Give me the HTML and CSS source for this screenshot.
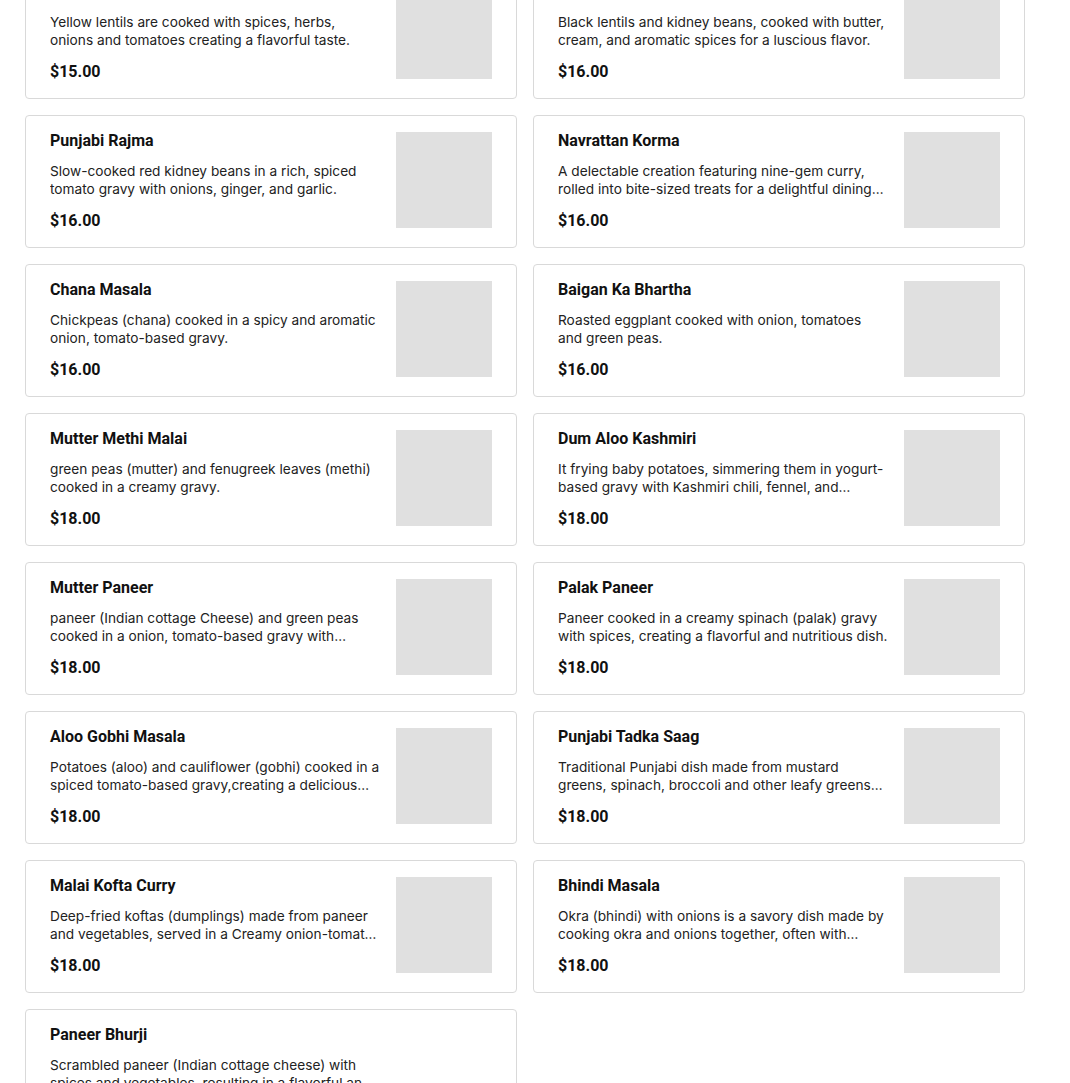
FILE: index.html
```html
<!DOCTYPE html>
<html lang="en">
<head>
  <meta charset="UTF-8" />
  <meta name="viewport" content="width=device-width, initial-scale=1.0"/>
  <title>Curries</title>
  <link rel="stylesheet" href="styles.css">
</head>
<body>
  <div class="menu-list">
    <div class="item-card">
      <div class="item-info">
        <h3 class="item-name">Yellow Dal Tadka</h3>
        <p class="item-desc">Yellow lentils are cooked with spices, herbs, onions and tomatoes creating a flavorful taste.</p>
        <div class="item-price">$15.00</div>
      </div>
      <div class="item-img"></div>
    </div>
    <div class="item-card">
      <div class="item-info">
        <h3 class="item-name">Dal Makhani</h3>
        <p class="item-desc">Black lentils and kidney beans, cooked with butter, cream, and aromatic spices for a luscious flavor.</p>
        <div class="item-price">$16.00</div>
      </div>
      <div class="item-img"></div>
    </div>
    <div class="item-card">
      <div class="item-info">
        <h3 class="item-name">Punjabi Rajma</h3>
        <p class="item-desc">Slow-cooked red kidney beans in a rich, spiced tomato gravy with onions, ginger, and garlic.</p>
        <div class="item-price">$16.00</div>
      </div>
      <div class="item-img"></div>
    </div>
    <div class="item-card">
      <div class="item-info">
        <h3 class="item-name">Navrattan Korma</h3>
        <p class="item-desc">A delectable creation featuring nine-gem curry, rolled into bite-sized treats for a delightful dining experience.</p>
        <div class="item-price">$16.00</div>
      </div>
      <div class="item-img"></div>
    </div>
    <div class="item-card">
      <div class="item-info">
        <h3 class="item-name">Chana Masala</h3>
        <p class="item-desc">Chickpeas (chana) cooked in a spicy and aromatic onion, tomato-based gravy.</p>
        <div class="item-price">$16.00</div>
      </div>
      <div class="item-img"></div>
    </div>
    <div class="item-card">
      <div class="item-info">
        <h3 class="item-name">Baigan Ka Bhartha</h3>
        <p class="item-desc">Roasted eggplant cooked with onion, tomatoes and green peas.</p>
        <div class="item-price">$16.00</div>
      </div>
      <div class="item-img"></div>
    </div>
    <div class="item-card">
      <div class="item-info">
        <h3 class="item-name">Mutter Methi Malai</h3>
        <p class="item-desc">green peas (mutter) and fenugreek leaves (methi) cooked in a creamy gravy.</p>
        <div class="item-price">$18.00</div>
      </div>
      <div class="item-img"></div>
    </div>
    <div class="item-card">
      <div class="item-info">
        <h3 class="item-name">Dum Aloo Kashmiri</h3>
        <p class="item-desc">It frying baby potatoes, simmering them in yogurt-based gravy with Kashmiri chili, fennel, and…</p>
        <div class="item-price">$18.00</div>
      </div>
      <div class="item-img"></div>
    </div>
    <div class="item-card">
      <div class="item-info">
        <h3 class="item-name">Mutter Paneer</h3>
        <p class="item-desc">paneer (Indian cottage Cheese) and green peas cooked in a onion, tomato-based gravy with spices.</p>
        <div class="item-price">$18.00</div>
      </div>
      <div class="item-img"></div>
    </div>
    <div class="item-card">
      <div class="item-info">
        <h3 class="item-name">Palak Paneer</h3>
        <p class="item-desc">Paneer cooked in a creamy spinach (palak) gravy with spices, creating a flavorful and nutritious dish.</p>
        <div class="item-price">$18.00</div>
      </div>
      <div class="item-img"></div>
    </div>
    <div class="item-card">
      <div class="item-info">
        <h3 class="item-name">Aloo Gobhi Masala</h3>
        <p class="item-desc">Potatoes (aloo) and cauliflower (gobhi) cooked in a spiced tomato-based gravy,creating a delicious and hearty dish.</p>
        <div class="item-price">$18.00</div>
      </div>
      <div class="item-img"></div>
    </div>
    <div class="item-card">
      <div class="item-info">
        <h3 class="item-name">Punjabi Tadka Saag</h3>
        <p class="item-desc">Traditional Punjabi dish made from mustard greens, spinach, broccoli and other leafy greens cooked with spices.</p>
        <div class="item-price">$18.00</div>
      </div>
      <div class="item-img"></div>
    </div>
    <div class="item-card">
      <div class="item-info">
        <h3 class="item-name">Malai Kofta Curry</h3>
        <p class="item-desc">Deep-fried koftas (dumplings) made from paneer and vegetables, served in a Creamy onion-tomato gravy.</p>
        <div class="item-price">$18.00</div>
      </div>
      <div class="item-img"></div>
    </div>
    <div class="item-card">
      <div class="item-info">
        <h3 class="item-name">Bhindi Masala</h3>
        <p class="item-desc">Okra (bhindi) with onions is a savory dish made by cooking okra and onions together, often with spices.</p>
        <div class="item-price">$18.00</div>
      </div>
      <div class="item-img"></div>
    </div>
    <div class="item-card">
      <div class="item-info">
        <h3 class="item-name">Paneer Bhurji</h3>
        <p class="item-desc">Scrambled paneer (Indian cottage cheese) with spices and vegetables, resulting in a flavorful and protein-rich dish.</p>
        <div class="item-price">$18.00</div>
      </div>
      <div class="item-img empty"></div>
    </div>
  </div>
</body>
</html>
```

FILE: styles.css
```css
body {
  margin: 0;
  background: #fff;
  color: #1a1a1a;
  font-family: Roboto, "Noto Sans", sans-serif;
}

/* page is scrolled a little past the first row */
.menu-list {
  display: grid;
  grid-template-columns: 492px 492px;
  gap: 16px;
  padding: 0 25px;
  margin-top: -34px;
}

.item-card {
  display: flex;
  gap: 16px;
  height: 133px;
  box-sizing: border-box;
  padding: 16px 24px;
  border: 1px solid #d9d9d9;
  border-radius: 4px;
  background: #fff;
}

.item-info {
  flex: 1;
  min-width: 0;
  display: flex;
  flex-direction: column;
}

.item-name {
  margin: 1px 0 13px;
  font-size: 16px;
  line-height: 16px;
  font-weight: 700;
  color: #111;
}

.item-desc {
  margin: 0;
  font-family: Inter, Roboto, sans-serif;
  font-size: 13.7px;
  line-height: 18px;
  color: #222;
  display: -webkit-box;
  -webkit-line-clamp: 2;
  -webkit-box-orient: vertical;
  overflow: hidden;
}

.item-price {
  margin: auto 0 -1px;
  font-size: 16px;
  line-height: 22px;
  font-weight: 700;
  color: #111;
}

.item-img {
  flex: none;
  width: 96px;
  height: 96px;
  background: #e0e0e0;
}

/* photo not loaded yet */
.item-img.empty {
  background: transparent;
}
```
